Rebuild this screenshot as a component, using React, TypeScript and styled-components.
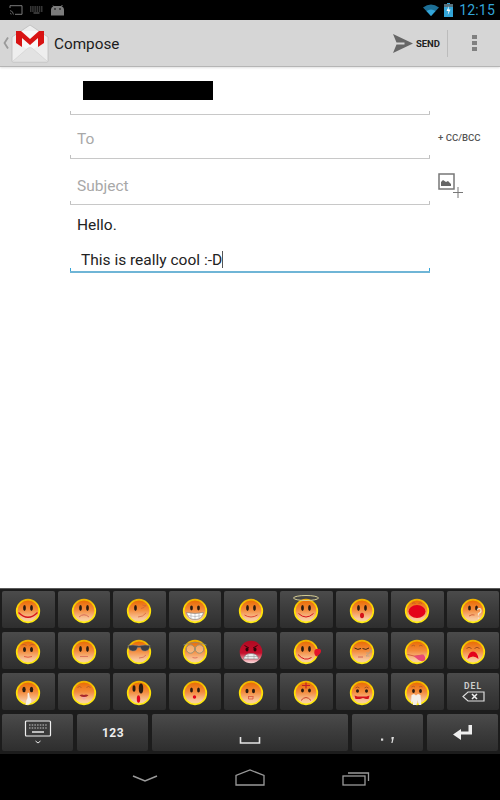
import React from "react";
import styled, { createGlobalStyle } from "styled-components";

const GlobalStyle = createGlobalStyle`
  html, body {
    margin: 0;
    padding: 0;
    background: #fff;
    font-family: Roboto, "Liberation Sans", sans-serif;
  }
`;

const Page = styled.div`
  width: 500px;
  height: 800px;
  display: flex;
  flex-direction: column;
  overflow: hidden;
`;

const StatusBar = styled.div`
  height: 20px;
  background: #000;
  display: flex;
  align-items: center;
  justify-content: space-between;
  padding: 0 5px 0 9px;
`;

const StatusGroup = styled.div`
  display: flex;
  align-items: center;
  gap: ${(p: { $gap: number }) => p.$gap}px;
`;

const Clock = styled.span`
  color: #33a5d8;
  font-size: 14px;
  letter-spacing: 0.2px;
  margin-left: 1px;
`;

const ActionBar = styled.div`
  height: 47px;
  box-sizing: border-box;
  background: #d6d6d6;
  border-bottom: 1px solid #b5b5b5;
  box-shadow: 0 1px 2px rgba(0, 0, 0, 0.12);
  display: flex;
  align-items: center;
  padding-left: 3px;
  position: relative;
`;

const Title = styled.span`
  font-size: 15.3px;
  color: #1c1c1c;
  margin-left: 5px;
  padding-top: 2px;
  flex: 1;
`;

const SendLabel = styled.span`
  font-size: 9.5px;
  font-weight: 700;
  color: #222;
  margin-left: 3px;
  margin-right: 7px;
`;

const BarDivider = styled.div`
  width: 1px;
  height: 27px;
  background: #bcbcbc;
`;

const Overflow = styled.div`
  width: 52px;
  display: flex;
  flex-direction: column;
  align-items: center;
  gap: 2px;
`;

const Dot = styled.span`
  width: 5px;
  height: 4px;
  background: #808080;
`;

const Compose = styled.div`
  flex: 1;
  background: #fff;
  padding-left: 70px;
`;

const Row = styled.div`
  display: flex;
  align-items: center;
`;

const Field = styled.div<{ $height: number; $focused?: boolean }>`
  width: 360px;
  height: ${(p) => p.$height}px;
  box-sizing: border-box;
  position: relative;
  flex-shrink: 0;
  border-bottom: ${(p) => (p.$focused ? "2px solid #6fb5d6" : "1px solid #c8c8c8")};
  &::before,
  &::after {
    content: "";
    position: absolute;
    bottom: 0;
    width: 1px;
    height: 3px;
    background: ${(p) => (p.$focused ? "#33a5d8" : "#c0c0c0")};
  }
  &::before {
    left: 0;
  }
  &::after {
    right: 0;
  }
`;

const FromField = styled(Field)`
  padding: 14px 0 0 13px;
`;

const Redacted = styled.div`
  width: 130px;
  height: 19px;
  background: #000;
`;

const Placeholder = styled.div`
  font-size: 15.5px;
  line-height: 20px;
  color: #a8a8a8;
  padding: ${(p: { $top: number }) => p.$top}px 0 0 7px;
`;

const BodyLine = styled.div<{ $top: number; $left: number }>`
  font-size: 15.5px;
  line-height: 20px;
  color: #222;
  padding: ${(p) => p.$top}px 0 0 ${(p) => p.$left}px;
`;

const Caret = styled.span`
  display: inline-block;
  width: 1px;
  height: 17px;
  background: #555;
  vertical-align: -3px;
`;

const CcLabel = styled.span`
  font-size: 9.6px;
  font-weight: 500;
  color: #555;
  margin-left: 8px;
  white-space: nowrap;
`;

const AttachSlot = styled.div`
  margin-left: 8px;
  height: 32px;
  align-self: flex-start;
  padding-top: 14px;
`;

const Keyboard = styled.div`
  height: 166px;
  box-sizing: border-box;
  background: #1c1c1c;
  border-top: 1px solid #5a5a5a;
  padding: 2px 1px 2px 2px;
  display: flex;
  flex-direction: column;
  gap: 4px;
`;

const EmojiGrid = styled.div`
  display: grid;
  grid-template-columns: repeat(9, 52.6px);
  grid-auto-rows: 37px;
  column-gap: 3px;
  row-gap: 4px;
`;

const BottomKeys = styled.div`
  display: grid;
  grid-template-columns: 71px 71px 196px 71px 71px;
  grid-auto-rows: 37px;
  column-gap: 4px;
`;

const Key = styled.div`
  background: linear-gradient(#4b4b4b 0%, #3d3d3d 45%, #2e2e2e 100%);
  border-radius: 2px;
  display: flex;
  align-items: center;
  justify-content: center;
  color: #eee;
  position: relative;
`;

const KeyText = styled.span`
  font-size: 12px;
  font-weight: 700;
  letter-spacing: 0.4px;
  padding-left: 1px;
`;

const DelKey = styled(Key)`
  flex-direction: column;
  gap: 0;
`;

const DelText = styled.span`
  font-size: 8.5px;
  font-weight: 700;
  letter-spacing: 1px;
  color: #ccc;
  line-height: 10px;
`;

const NavBar = styled.div`
  height: 46px;
  background: #000;
  display: grid;
  grid-template-columns: 105px 105px 107px;
  padding: 15px 0 0 92px;
  align-items: start;
  box-sizing: border-box;
`;

const NavSlot = styled.div`
  display: flex;
  justify-content: center;
  height: 20px;
`;

type Variant =
  | "bigSmile" | "sad" | "wink" | "teeth" | "smile" | "angel" | "oh" | "shout" | "question"
  | "brows" | "neutral" | "shades" | "glasses" | "angry" | "kiss" | "sleepy" | "tongue" | "cry"
  | "hush" | "lips" | "tall" | "dot" | "smallSad" | "cross" | "grimace" | "fangs";

const emojiRows: Variant[] = [
  "bigSmile", "sad", "wink", "teeth", "smile", "angel", "oh", "shout", "question",
  "brows", "neutral", "shades", "glasses", "angry", "kiss", "sleepy", "tongue", "cry",
  "hush", "lips", "tall", "dot", "smallSad", "cross", "grimace", "fangs",
];

const Eyes = ({ h = 3 }: { h?: number }) => (
  <>
    <ellipse cx="9.5" cy="10" rx="1.4" ry={h} fill="#2a1a10" />
    <ellipse cx="16.5" cy="10" rx="1.4" ry={h} fill="#2a1a10" />
  </>
);

const faceParts: Record<Variant, React.ReactNode> = {
  bigSmile: (
    <>
      <Eyes />
      <path d="M3.5 14.5q9.5 9.5 19 0" fill="none" stroke="#d5121a" strokeWidth="1.3" />
    </>
  ),
  sad: (
    <>
      <Eyes />
      <path d="M8 19q5-4.5 10 0" fill="none" stroke="#d2685a" strokeWidth="0.9" />
    </>
  ),
  wink: (
    <>
      <ellipse cx="9.5" cy="10" rx="1.4" ry="3" fill="#2a1a10" />
      <path d="M15 10.5q3.5-.5 5-3-2 .5-3.500-.5M12 19q5 0 8-4" fill="none" stroke="#d0603c" strokeWidth="0.7" />
    </>
  ),
  teeth: (
    <>
      <Eyes h={2.4} />
      <path d="M4.5 14.5q8.5 2 17 0-1.5 7-8.5 7t-8.5-7z" fill="#fff" stroke="#777" strokeWidth="0.6" />
      <path d="M9 15v5.5M13 15.5v6M17 15v5.5M5.5 17.5q7.5 2 15 0" stroke="#999" strokeWidth="0.5" fill="none" />
    </>
  ),
  smile: (
    <>
      <Eyes />
      <path d="M6.5 17q6.5 4 13 0" fill="none" stroke="#d93a2a" strokeWidth="0.9" />
    </>
  ),
  angel: (
    <>
      <Eyes />
      <path d="M5.5 15.5q7.5 7 15 0" fill="none" stroke="#d5121a" strokeWidth="1" />
    </>
  ),
  oh: (
    <>
      <Eyes />
      <ellipse cx="13" cy="17.5" rx="2" ry="2.8" fill="#d5121a" />
    </>
  ),
  shout: (
    <>
      <path d="M8 5.5q2-1.5 3.5 0M14.5 5.5q2-1.5 3.5 0" fill="none" stroke="#b5562c" strokeWidth="0.7" />
      <ellipse cx="13" cy="13.5" rx="8.5" ry="6.5" fill="#e4021b" />
    </>
  ),
  question: (
    <>
      <Eyes h={2.6} />
      <path d="M9 18q3-2 5.5-1" fill="none" stroke="#c9522e" strokeWidth="0.8" />
      <path d="M17 11.5q3.5-2 4 .5t-2.5 3.5v2M18.5 19.5v1.3" fill="none" stroke="#f4e8d0" strokeWidth="1.2" />
    </>
  ),
  brows: (
    <>
      <path d="M6.5 6q3-1.5 5 .5M14.5 6.5q2-2 5-.5" fill="none" stroke="#b5562c" strokeWidth="0.7" />
      <ellipse cx="9.5" cy="10.5" rx="1.5" ry="2.5" fill="#2a1a10" />
      <ellipse cx="16.5" cy="10.5" rx="1.5" ry="2.5" fill="#2a1a10" />
      <path d="M9 17.5q4 1.5 8 0" fill="none" stroke="#e0503c" strokeWidth="0.9" />
    </>
  ),
  neutral: (
    <>
      <Eyes />
      <path d="M9 17.5h8" fill="none" stroke="#d9705c" strokeWidth="0.9" />
    </>
  ),
  shades: (
    <>
      <path d="M2 6.5q5-1 11 .5 6-1.5 11-.5-.5 5-4.5 5.5t-5-3.5h-3q-1 4-5 3.5T2 6.5z" fill="#3d3d44" stroke="#888" strokeWidth="0.5" />
      <path d="M13 19q5 0 7-3" fill="none" stroke="#d9705c" strokeWidth="0.9" />
    </>
  ),
  glasses: (
    <>
      <circle cx="8.5" cy="10" r="4.2" fill="rgba(255,240,210,.4)" stroke="#8d8d76" strokeWidth="0.9" />
      <circle cx="17.5" cy="10" r="4.2" fill="rgba(255,240,210,.4)" stroke="#8d8d76" strokeWidth="0.9" />
      <path d="M1.5 6q11.5-5 23 0" fill="none" stroke="#8d8d76" strokeWidth="0.8" />
      <path d="M10.5 18.5q2.5 1 5 0" fill="none" stroke="#e0705c" strokeWidth="0.9" />
    </>
  ),
  angry: (
    <>
      <path d="M6.5 6.5l4.5 2.5M19.5 6.5l-4.5 2.5" stroke="#3a0508" strokeWidth="1" />
      <ellipse cx="9" cy="10.5" rx="1.5" ry="2" fill="#2a0508" />
      <ellipse cx="17" cy="10.5" rx="1.5" ry="2" fill="#2a0508" />
      <path d="M5.5 20q1-5.5 7.5-5.5t7.5 5.5z" fill="#eee" stroke="#777" strokeWidth="0.6" />
      <path d="M6 17.5h14M10 15v5M16 15v5" stroke="#888" strokeWidth="0.5" />
    </>
  ),
  kiss: (
    <>
      <Eyes />
      <path d="M5 15.5q6.5 7.5 13.5 3" fill="none" stroke="#d5121a" strokeWidth="1" />
      <path d="M21.5 11.5q1.5-2.5 3.5-1.5 2.5-1 3 1.5.5 3-4.5 6-3-2-2-6z" fill="#e4132a" />
    </>
  ),
  sleepy: (
    <>
      <path d="M5.5 9q3.5 2.5 6.5 .5M13.5 9.500q3.5 2 6.5-.5" fill="none" stroke="#2a1a10" strokeWidth="0.9" />
      <path d="M9 18h5" stroke="#d9705c" strokeWidth="1.2" />
      <path d="M17 14h3.5l-3.5 3h3.5M20.5 11h2.5l-2.5 2h2.5" fill="none" stroke="#a9a090" strokeWidth="0.7" />
    </>
  ),
  tongue: (
    <>
      <path d="M7.5 7q2-1.5 3.5 0M15 7q2-1.5 3.5 0" fill="none" stroke="#a5542c" strokeWidth="0.7" />
      <path d="M3.5 15.5q7 3 15 .5" fill="none" stroke="#c9522e" strokeWidth="0.8" />
      <path d="M9.5 17l10-1.5q3 3.5 1 6-3 1.5-6-.5z" fill="#e94a76" />
    </>
  ),
  cry: (
    <>
      <path d="M6.5 9.5q2.5-2.5 5 0M14.5 9.5q2.5-2.5 5 0" fill="none" stroke="#8d3f1c" strokeWidth="0.8" />
      <path d="M7.5 20q1-7.5 5.5-7.5t5.5 7.5q-2.5-2.5-5.5-2.5T7.5 20z" fill="#e4021b" />
    </>
  ),
  hush: (
    <>
      <ellipse cx="9" cy="9.5" rx="1.7" ry="2.8" fill="#2a1a10" />
      <ellipse cx="16.5" cy="9.5" rx="1.7" ry="2.8" fill="#2a1a10" />
      <path d="M10.5 25l1-5q1.5-1 1-6.5l1.5-1 .8 5 1.7 2-.5 3q-2.5 3-5.5 2.500z" fill="#f5efe8" />
    </>
  ),
  lips: (
    <>
      <path d="M6.5 7.5q2-2 4 0M15.5 7.5q2-2 4 0" fill="none" stroke="#a5542c" strokeWidth="0.7" />
      <path d="M8.5 15.5q2-1.5 4.5-.5 2.5-1 4.5 .5-4.5 3-9 0z" fill="#a8282c" />
      <path d="M10.5 17q2.5 5 5 0z" fill="#f2a7a0" />
    </>
  ),
  tall: (
    <>
      <ellipse cx="8" cy="8.5" rx="1.5" ry="3.2" fill="#2a1a10" />
      <ellipse cx="15" cy="8.5" rx="2.2" ry="5" fill="#2a1a10" />
      <ellipse cx="12.5" cy="19" rx="1.7" ry="3.8" fill="#e4021b" />
    </>
  ),
  dot: (
    <>
      <Eyes h={2.6} />
      <circle cx="12.5" cy="17" r="1.7" fill="#e4021b" />
    </>
  ),
  smallSad: (
    <>
      <ellipse cx="9" cy="11" rx="1.5" ry="2.3" fill="#2a1a10" />
      <ellipse cx="15.5" cy="11" rx="1.5" ry="2.3" fill="#2a1a10" />
      <path d="M10 16.5h5.5M10.5 16.5v2.5h4.5v-2.5" fill="none" stroke="#d9503c" strokeWidth="0.8" />
    </>
  ),
  cross: (
    <>
      <path d="M9 5.5h8M13 2.5v6" stroke="#c0202a" strokeWidth="1.2" />
      <ellipse cx="9.5" cy="10.5" rx="1.4" ry="2" fill="#2a1a10" />
      <ellipse cx="16.5" cy="10.5" rx="1.4" ry="2" fill="#2a1a10" />
      <path d="M8 20.5q5-6 10 0" fill="none" stroke="#c9452e" strokeWidth="1" />
    </>
  ),
  grimace: (
    <>
      <path d="M6.5 8q2-2 4 0M15.5 8q2-2 4 0" fill="none" stroke="#8d3f1c" strokeWidth="0.7" />
      <ellipse cx="8.5" cy="11" rx="1.5" ry="1.8" fill="#2a1a10" />
      <ellipse cx="17.5" cy="11" rx="1.5" ry="1.8" fill="#2a1a10" />
      <path d="M5.5 15.5l3 1h9l3-1-1 3.5h-2.5l-3-1-3 1H6.5z" fill="#d5121a" />
    </>
  ),
  fangs: (
    <>
      <path d="M7.5 7q2-1.5 3.5 0M15 7q2-1.5 3.5 0" fill="none" stroke="#a5542c" strokeWidth="0.7" />
      <ellipse cx="9.5" cy="11" rx="1.4" ry="2" fill="#2a1a10" />
      <ellipse cx="16.5" cy="11" rx="1.4" ry="2" fill="#2a1a10" />
      <path d="M7.5 15l2.5-1 2 1.5 2-1.5 2.5 1 .8 10H15l-1.5-5-1 5H9l-.5-4-1.500 3z" fill="#f3efe8" />
    </>
  ),
};

const Face = ({ variant }: { variant: Variant }) => {
  const angry = variant === "angry";
  const id = angry ? "faceRed" : "faceOrange";
  return (
    <svg width="30" height="30" viewBox="-2 -3 30 30" style={{ overflow: "visible" }}>
      <circle
        cx="13"
        cy="13"
        r="11.3"
        fill={`url(#${id})`}
        stroke={angry ? "none" : "url(#faceRim)"}
        strokeWidth="1.7"
      />
      {variant === "angel" && (
        <ellipse cx="13" cy="0" rx="12.5" ry="2.5" fill="none" stroke="#d8cf95" strokeWidth="1" />
      )}
      {faceParts[variant]}
    </svg>
  );
};

const FaceDefs = () => (
  <svg width="0" height="0" style={{ position: "absolute" }}>
    <defs>
      <linearGradient id="faceOrange" x1="0" y1="0" x2="0" y2="1">
        <stop offset="0" stopColor="#e96a00" />
        <stop offset="0.45" stopColor="#f38b3c" />
        <stop offset="0.85" stopColor="#f9c8a0" />
        <stop offset="1" stopColor="#fbd98a" />
      </linearGradient>
      <linearGradient id="faceRim" x1="0" y1="0" x2="0" y2="1">
        <stop offset="0" stopColor="#eeb000" />
        <stop offset="0.35" stopColor="#ffdc00" />
        <stop offset="1" stopColor="#ffec10" />
      </linearGradient>
      <linearGradient id="faceRed" x1="0" y1="0" x2="0" y2="1">
        <stop offset="0" stopColor="#b00a22" />
        <stop offset="0.55" stopColor="#c5102c" />
        <stop offset="0.85" stopColor="#f2a0a8" />
        <stop offset="1" stopColor="#fbe0e0" />
      </linearGradient>
    </defs>
  </svg>
);

const IconSlot = styled.div`
  display: flex;
  margin-left: 2px;
`;

const GmailIcon = () => (
  <IconSlot>
    <svg width="38" height="39" viewBox="0 0 38 39">
      <path d="M19 1L1 13v24q0 1 1 1h34q1 0 1-1V13z" fill="#eeeeee" stroke="#bdbdbd" strokeWidth="0.8" />
      <path d="M6 7h26v12l-13 8-13-8z" fill="#f7f7f7" />
      <path d="M5 7h5l9 8 9-8h5v12l-6 4V14l-8 7-8-7v9l-6-4z" fill="#d81313" />
      <path d="M2 37l15-13q2-1 4 0l15 13" fill="#e2e2e2" stroke="#cfcfcf" strokeWidth="0.6" />
    </svg>
  </IconSlot>
);

const BackChevron = () => (
  <svg width="6" height="12" viewBox="0 0 6 12">
    <path d="M5 .5L1.5 6 5 11.5" fill="none" stroke="#9a9a9a" strokeWidth="1.8" />
  </svg>
);

const SendIcon = () => (
  <svg width="20" height="19" viewBox="0 0 20 19">
    <path d="M0 0l20 9.5L0 19l3.5-8.5h8v-2h-8z" fill="#666" />
  </svg>
);

const AttachIcon = () => (
  <svg width="26" height="26" viewBox="0 0 26 26">
    <rect x="1" y="1" width="15" height="15" fill="#fff" stroke="#777" strokeWidth="1.5" />
    <path d="M3 13V9l2-2 3 2 2-1 3 3v2z" fill="#666" />
    <path d="M20 14v11M15 19.5h10" stroke="#777" strokeWidth="1" />
  </svg>
);

const CastIcon = () => (
  <svg width="14" height="10" viewBox="0 0 14 10">
    <path d="M1 3V.7h12v8.6H6" fill="none" stroke="#7a7a7a" strokeWidth="1" />
    <path d="M1 5.5q3 .5 3.5 4M1 8q1 .2 1.2 1.5" fill="none" stroke="#7a7a7a" strokeWidth="0.8" />
  </svg>
);

const KeyboardSmallIcon = () => (
  <svg width="13" height="8" viewBox="0 0 13 8">
    <path d="M0 1h13M0 3h13M0 5h13" stroke="#6d6d6d" strokeWidth="1" strokeDasharray="1.5 .7" />
    <path d="M3.5 7h6" stroke="#6d6d6d" strokeWidth="1" />
  </svg>
);

const AndroidIcon = () => (
  <svg width="15" height="11" viewBox="0 0 15 11">
    <path d="M1 10.5V5q0-3 3-4h7q3 1 3 4v5.5z" fill="#7c7c7c" />
    <path d="M10.5 2l2-2M4 2L3 .5" stroke="#7c7c7c" strokeWidth="1" />
    <circle cx="5" cy="4" r=".8" fill="#000" />
    <circle cx="10" cy="4" r=".8" fill="#000" />
  </svg>
);

const WifiIcon = () => (
  <svg width="16" height="12" viewBox="0 0 16 12">
    <path d="M8 12L0 3.5Q8-2.5 16 3.5z" fill="#1d6f96" />
    <path d="M8 12L3.5 7q4.5-3 9 0z" fill="#33a5d8" />
  </svg>
);

const BatteryIcon = () => (
  <svg width="9" height="14" viewBox="0 0 9 14">
    <path d="M3 0h3v1h3v13H0V1h3z" fill="#33a5d8" />
    <path d="M0 1h9v3H0z" fill="#56707c" />
    <path d="M5 3L2.5 8h2l-.7 4L6.5 6.5h-2z" fill="#fff" />
  </svg>
);

const KeyboardKeyIcon = () => (
  <svg width="28" height="28" viewBox="0 0 28 28" style={{ marginTop: 3 }}>
    <rect x="1.5" y="1" width="25" height="15" rx="1" fill="#3a3a3a" stroke="#f0f0f0" strokeWidth="1.2" />
    <path d="M5 5h18M5 8h18" stroke="#c8c8c8" strokeWidth="1.2" strokeDasharray="1.5 1.2" />
    <path d="M8 12h12" stroke="#e8e8e8" strokeWidth="1.5" />
    <path d="M11.5 21l2.5 2 2.5-2" fill="none" stroke="#e8e8e8" strokeWidth="1" />
  </svg>
);

const SpaceIcon = () => (
  <svg width="22" height="8" viewBox="0 0 22 8" style={{ marginTop: 16 }}>
    <path d="M1.5 0v6h19V0" fill="none" stroke="#e4e4e4" strokeWidth="1.6" />
  </svg>
);

const DelIcon = () => (
  <svg width="23" height="11" viewBox="0 0 23 11">
    <path d="M6 1h16v9H6L1 5.5z" fill="none" stroke="#ddd" strokeWidth="1.2" />
    <path d="M10 3l5 5M15 3l-5 5" stroke="#eee" strokeWidth="1.5" />
  </svg>
);

const PunctIcon = () => (
  <svg width="14" height="8" viewBox="0 0 14 8" style={{ marginTop: 14 }}>
    <rect x="0" y="2.5" width="2.2" height="2.2" fill="#ddd" />
    <path d="M10.5 1h2.5l-1.5 6h-1.2l.8-3.5h-.6z" fill="#ddd" />
  </svg>
);

const EnterIcon = () => (
  <svg width="20" height="16" viewBox="0 0 20 16">
    <path d="M15.5 0H19v9.5H8V15L0 9.5 8 4v2.5h7.5z" fill="#eee" />
  </svg>
);

const NavBackIcon = () => (
  <svg width="26" height="10" viewBox="0 0 26 10" style={{ marginTop: 5 }}>
    <path d="M1 2l12 5 12-5" fill="none" stroke="#9a9a9a" strokeWidth="1.6" />
  </svg>
);

const NavHomeIcon = () => (
  <svg width="30" height="17" viewBox="0 0 30 17">
    <path d="M1 16V6.5L15 1l14 5.5V16z" fill="none" stroke="#9a9a9a" strokeWidth="1.3" />
  </svg>
);

const NavRecentIcon = () => (
  <svg width="28" height="16" viewBox="0 0 28 16" style={{ marginTop: 1 }}>
    <rect x="1" y="6" width="22" height="9" fill="none" stroke="#9a9a9a" strokeWidth="1.3" />
    <path d="M6 3h20.5v8" fill="none" stroke="#9a9a9a" strokeWidth="1.3" />
  </svg>
);

const App: React.FC = () => {
  return (
    <Page>
      <GlobalStyle />
      <FaceDefs />
      <StatusBar>
        <StatusGroup $gap={7}>
          <CastIcon />
          <KeyboardSmallIcon />
          <AndroidIcon />
        </StatusGroup>
        <StatusGroup $gap={5}>
          <WifiIcon />
          <BatteryIcon />
          <Clock>12:15</Clock>
        </StatusGroup>
      </StatusBar>
      <ActionBar>
        <BackChevron />
        <GmailIcon />
        <Title>Compose</Title>
        <SendIcon />
        <SendLabel>SEND</SendLabel>
        <BarDivider />
        <Overflow>
          <Dot />
          <Dot />
          <Dot />
        </Overflow>
      </ActionBar>
      <Compose>
        <Row>
          <FromField $height={48}>
            <Redacted />
          </FromField>
        </Row>
        <Row>
          <Field $height={44}>
            <Placeholder $top={14}>To</Placeholder>
          </Field>
          <CcLabel>+ CC/BCC</CcLabel>
        </Row>
        <Row>
          <Field $height={46}>
            <Placeholder $top={17}>Subject</Placeholder>
          </Field>
          <AttachSlot>
            <AttachIcon />
          </AttachSlot>
        </Row>
        <Field $height={68} $focused>
          <BodyLine $top={10} $left={7}>Hello.</BodyLine>
          <BodyLine $top={15} $left={11}>
            This is really cool :-D
            <Caret />
          </BodyLine>
        </Field>
      </Compose>
      <Keyboard>
        <EmojiGrid>
          {emojiRows.map((variant) => (
            <Key key={variant}>
              <Face variant={variant} />
            </Key>
          ))}
          <DelKey>
            <DelText>DEL</DelText>
            <DelIcon />
          </DelKey>
        </EmojiGrid>
        <BottomKeys>
          <Key>
            <KeyboardKeyIcon />
          </Key>
          <Key>
            <KeyText>123</KeyText>
          </Key>
          <Key>
            <SpaceIcon />
          </Key>
          <Key>
            <PunctIcon />
          </Key>
          <Key>
            <EnterIcon />
          </Key>
        </BottomKeys>
      </Keyboard>
      <NavBar>
        <NavSlot>
          <NavBackIcon />
        </NavSlot>
        <NavSlot>
          <NavHomeIcon />
        </NavSlot>
        <NavSlot>
          <NavRecentIcon />
        </NavSlot>
      </NavBar>
    </Page>
  );
};

export default App;
